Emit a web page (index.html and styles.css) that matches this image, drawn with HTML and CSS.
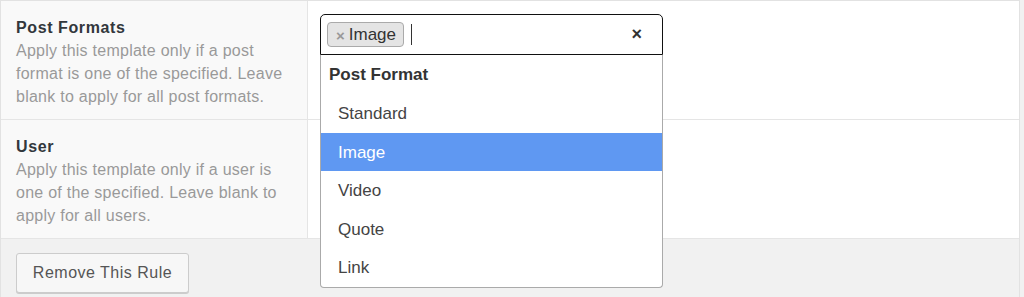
FILE: index.html
```html
<!DOCTYPE html>
<html lang="en">
<head>
    <meta charset="UTF-8">
    <title>Template rules</title>
    <link rel="stylesheet" href="styles.css">
</head>
<body>
    <div class="rules">
        <div class="rule-row">
            <div class="rule-label">
                <h4>Post Formats</h4>
                <p>Apply this template only if a post format is one of the specified. Leave blank to apply for all post formats.</p>
            </div>
            <div class="rule-field">
                <div class="select open">
                    <div class="select-box">
                        <span class="tag"><span class="tag-remove">×</span>Image</span>
                        <span class="caret"></span>
                        <span class="clear">×</span>
                    </div>
                    <ul class="dropdown">
                        <li class="group">Post Format</li>
                        <li class="option">Standard</li>
                        <li class="option active">Image</li>
                        <li class="option">Video</li>
                        <li class="option">Quote</li>
                        <li class="option">Link</li>
                    </ul>
                </div>
            </div>
        </div>
        <div class="rule-row">
            <div class="rule-label">
                <h4>User</h4>
                <p>Apply this template only if a user is one of the specified. Leave blank to apply for all users.</p>
            </div>
            <div class="rule-field"></div>
        </div>
        <div class="rule-footer">
            <button class="button">Remove This Rule</button>
        </div>
    </div>
</body>
</html>
```

FILE: styles.css
```css
body {
    margin: 0;
    background-color: #f1f1f1;
    font-family: "Liberation Sans", Arial, sans-serif;
    color: #333;
}
.rules {
    width: 1020px;
    box-sizing: border-box;
    border: 1px solid #e2e2e2;
    border-bottom: none;
    min-height: 297px;
}
.rule-row {
    display: grid;
    grid-template-columns: 307px 1fr;
    height: 119px;
    box-sizing: border-box;
    border-bottom: 1px solid #e5e5e5;
}
.rule-label {
    background-color: #f9f9f9;
    border-right: 1px solid #e5e5e5;
    padding: 15px 15px 0;
}
.rule-label h4 {
    margin: 0;
    font-size: 16px;
    line-height: 23px;
    letter-spacing: 0.6px;
    font-weight: bold;
    color: #32373c;
}
.rule-label p {
    margin: 0;
    width: 268px;
    font-size: 16px;
    line-height: 23px;
    letter-spacing: 0.25px;
    color: #999;
}
.rule-field {
    background-color: #fff;
    padding: 13px 12px 0;
}
.select {
    position: relative;
    width: 343px;
}
.select-box {
    display: flex;
    align-items: flex-start;
    height: 41px;
    box-sizing: border-box;
    border: 1px solid #111;
    border-radius: 5px 5px 0 0;
    background-color: #fff;
    padding: 7px 20px 0 6px;
}
.tag {
    display: flex;
    align-items: center;
    height: 25px;
    box-sizing: border-box;
    padding: 1px 7px 0 8px;
    border: 1px solid #aaa;
    border-radius: 4px;
    background-color: #e4e4e4;
    font-size: 17px;
    color: #333;
}
.tag-remove {
    font-size: 15px;
    font-weight: bold;
    color: #999;
    margin-right: 4px;
}
.caret {
    width: 1px;
    height: 21px;
    margin: 2px 0 0 7px;
    background-color: #333;
}
.clear {
    margin-left: auto;
    margin-top: 2px;
    font-size: 18px;
    font-weight: bold;
    color: #333;
}
.dropdown {
    position: absolute;
    top: 100%;
    left: 0;
    right: 0;
    margin: 0;
    padding: 0;
    list-style: none;
    background-color: #fff;
    border: 1px solid #aaa;
    border-top: none;
    border-radius: 0 0 4px 4px;
    font-size: 17px;
    color: #444;
    z-index: 10;
}
.group {
    height: 39px;
    line-height: 40px;
    padding-left: 8px;
    font-weight: bold;
    color: #333;
}
.option {
    height: 38.6px;
    line-height: 40px;
    padding-left: 17px;
}
.option.active {
    background-color: #5f98f2;
    color: #fff;
}
.rule-footer {
    background-color: #f1f1f1;
    padding: 14px 15px;
}
.button {
    height: 40px;
    width: 173px;
    padding: 0;
    font-family: inherit;
    font-size: 16px;
    letter-spacing: 0.5px;
    color: #555;
    background-color: #f7f7f7;
    border: 1px solid #ccc;
    border-radius: 3px;
    box-shadow: 0 1px 0 #ccc;
    cursor: pointer;
}
```
